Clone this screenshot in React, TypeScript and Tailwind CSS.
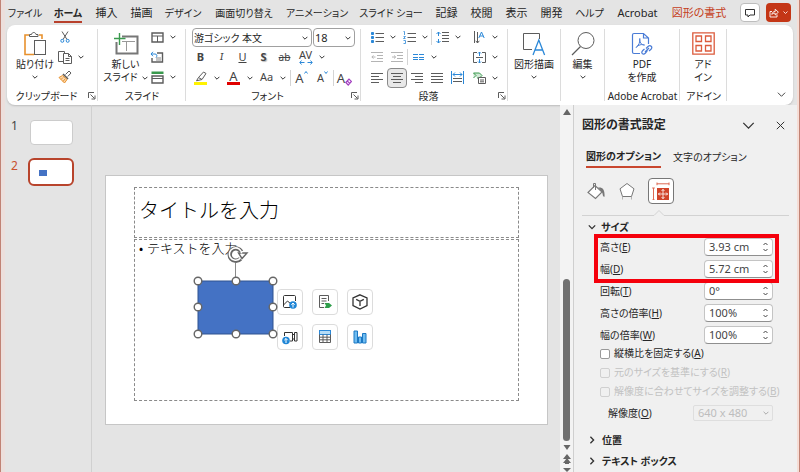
import { useState } from 'react';
import type { ReactNode } from 'react';

const GRAY = '#5c5c5c';
const BLUE = '#2b88d8';

function Svg({ w = 16, h = 16, box, children }: { w?: number; h?: number; box?: string; children: ReactNode }) {
  return (
    <svg width={w} height={h} viewBox={box ?? `0 0 ${w} ${h}`} fill="none" stroke={GRAY} strokeWidth="1" className="block shrink-0" aria-hidden="true">
      {children}
    </svg>
  );
}

function Chevron({ w = 6, color = '#333333' }: { w?: number; color?: string }) {
  return (
    <svg width={w} height={w} viewBox="0 0 6 6" fill="none" stroke={color} strokeWidth={w > 8 ? 0.6 : 1} className="block shrink-0" aria-hidden="true">
      <path d="M0.6 1.8 3 4.2 5.4 1.8" />
    </svg>
  );
}

function Cell({ label, width = 'w-5', selected = false, children }: { label: string; width?: string; selected?: boolean; children: ReactNode }) {
  return (
    <button
      type="button"
      aria-label={label}
      className={`flex h-5 shrink-0 items-center justify-center ${width} ${selected ? 'rounded border border-[#8a8a8a] bg-[#e8e8e8]' : ''}`}
    >
      {children}
    </button>
  );
}

function Drop({ label }: { label: string }) {
  return (
    <Cell label={label} width="w-3">
      <Chevron />
    </Cell>
  );
}

function Sep() {
  return <span className="h-4 w-px shrink-0 bg-[#d4d4d4]" />;
}

function Launcher() {
  return (
    <button type="button" aria-label="詳細設定" className="absolute right-0.5 top-1">
      <Svg w={8} h={8}>
        <path d="M0.5 6V0.5H6M2.5 2.5 6.5 6.5M7 3.5V7H3.5" />
      </Svg>
    </button>
  );
}

function Group({ width, label, launcher = false, children }: { width: string; label: string; launcher?: boolean; children: ReactNode }) {
  return (
    <section aria-label={label || undefined} className={`flex shrink-0 flex-col pt-0.5 ${width}`}>
      <div className="flex h-[61px]">
        <div className="min-w-0 flex-1">{children}</div>
        <span className="mt-0.5 h-[72px] w-px shrink-0 bg-[#dcdcdc]" />
      </div>
      <div className={`relative flex h-4 justify-center whitespace-nowrap text-[10px] leading-4 ${launcher ? 'pr-3' : ''}`}>
        {label}
        {launcher && <Launcher />}
      </div>
    </section>
  );
}

function BigButton({ icon, lines, drop = false, dropInline = false }: { icon: ReactNode; lines: string[]; drop?: boolean; dropInline?: boolean }) {
  return (
    <button type="button" className="flex w-full flex-col items-center pt-0.5 text-[10px] leading-[13px]">
      <span className="flex h-[29px] items-center">{icon}</span>
      {lines.map((line, i) => (
        <span key={line} className="flex items-center gap-1 whitespace-nowrap">
          {line}
          {dropInline && i === lines.length - 1 && <Chevron />}
        </span>
      ))}
      {drop && (
        <span className="flex h-3 items-center">
          <Chevron />
        </span>
      )}
    </button>
  );
}

const TABS = [
  { name: 'ファイル', width: 'w-[30px]', size: 'text-[10px]' },
  { name: 'ホーム', width: 'w-7', size: 'text-[10px]' },
  { name: '挿入', width: 'w-[21px]', size: 'text-[11px]' },
  { name: '描画', width: 'w-[21px]', size: 'text-[11px]' },
  { name: 'デザイン', width: 'w-[34px]', size: 'text-[10px]' },
  { name: '画面切り替え', width: 'w-[60px]', size: 'text-[10px]' },
  { name: 'アニメーション', width: 'w-[58px]', size: 'text-[10px]' },
  { name: 'スライド ショー', width: 'w-[62px]', size: 'text-[10px]' },
  { name: '記録', width: 'w-[21px]', size: 'text-[11px]' },
  { name: '校閲', width: 'w-[21px]', size: 'text-[11px]' },
  { name: '表示', width: 'w-[21px]', size: 'text-[11px]' },
  { name: '開発', width: 'w-[21px]', size: 'text-[11px]' },
  { name: 'ヘルプ', width: 'w-[27px]', size: 'text-[10px]' },
  { name: 'Acrobat', width: 'w-[41px]', size: 'text-[11px]' },
  { name: '図形の書式', width: 'w-[54px]', size: 'text-[11px]' },
];

function TabBar() {
  return (
    <header className="flex h-[25px] items-start pl-[5px] pr-1.5">
      <nav className="flex gap-3.5 pt-1.5" aria-label="リボン">
        {TABS.map(({ name, width, size }) => (
          <button
            key={name}
            type="button"
            className={`flex h-[17px] shrink-0 justify-center whitespace-nowrap leading-[14px] ${width} ${size} ${
              name === 'ホーム' ? 'border-b-2 border-[#b8402c] font-bold' : ''
            } ${name === '図形の書式' ? 'text-[#c43e1c]' : ''}`}
          >
            {name}
          </button>
        ))}
      </nav>
      <div className="ml-auto flex gap-1.5 pt-[3px]">
        <button type="button" aria-label="コメント" className="flex h-[19px] w-5 items-center justify-center rounded border border-[#bdbdbd] bg-white">
          <Svg w={10} h={10}>
            <path d="M0.5 1.5H9.5V7H5L3 9V7H0.5Z" stroke="#333333" />
          </Svg>
        </button>
        <button type="button" aria-label="共有" className="flex h-[19px] w-[25px] items-center justify-center gap-1 rounded bg-[#c43616]">
          <Svg w={10} h={10}>
            <path d="M3 3.5H1V9H8V6.5M2.8 6.5C3 4.5 4.5 3.5 6.2 3.5V1.2L9.4 4.2 6.2 7V5.2C4.8 5.2 3.6 5.5 2.8 6.5Z" stroke="#ffffff" strokeWidth="0.9" />
          </Svg>
          <Chevron w={5} color="#ffffff" />
        </button>
      </div>
    </header>
  );
}

function ClipboardGroup() {
  return (
    <Group width="w-[91px]" label="クリップボード" launcher>
      <div className="flex">
        <div className="ml-2 w-10">
          <BigButton
            drop
            lines={['貼り付け']}
            icon={
              <Svg w={24} h={26}>
                <path d="M6 4H2V23.5H11M16 4H19V8" stroke="#e8912d" strokeWidth="1.6" />
                <path d="M6.5 5.5V3.5H8.5C9 0.8 12.5 0.8 13 3.5H15V5.5Z" fill="#ffffff" />
                <rect x="11.5" y="9.5" width="11" height="14" fill="#ffffff" />
              </Svg>
            }
          />
        </div>
        <div>
          <Cell label="切り取り">
            <Svg w={10} h={12}>
              <path d="M2 0.5 7 8.5M8 0.5 3 8.5" />
              <circle cx="2.3" cy="9.8" r="1.5" stroke={BLUE} />
              <circle cx="7.7" cy="9.8" r="1.5" stroke={BLUE} />
            </Svg>
          </Cell>
          <div className="flex">
            <Cell label="コピー">
              <Svg w={14} h={14}>
                <path d="M5 11.5H0.5V1.5H6.5V3" />
                <path d="M5.5 3.5H10.5L13.5 6.5V13.5H5.5ZM10.5 3.5V6.5H13.5M7.5 8.5H11.5M7.5 10.5H11.5" />
              </Svg>
            </Cell>
            <Drop label="コピーのオプション" />
          </div>
          <Cell label="書式のコピー">
            <Svg w={14} h={14}>
              <path d="M7.5 4.5 11 1 13 3 9.8 6.5" />
              <path d="M5 4 10 9" strokeWidth="1.6" />
              <path d="M4.5 5.5 1 7.5 6.5 13 9 9.5Z" stroke="#e8912d" fill="#fbd9ae" />
              <path d="M3 9.5 5 7.5M5 11.5 7 9" stroke="#e8912d" />
            </Svg>
          </Cell>
        </div>
      </div>
    </Group>
  );
}

function SlideGroup() {
  return (
    <Group width="w-[88px]" label="スライド">
      <div className="flex">
        <div className="ml-1.5 w-[43px]">
          <BigButton
            dropInline
            lines={['新しい', 'スライド']}
            icon={
              <Svg w={26} h={24}>
                <path d="M9 4.5H24.5V21.5H3.5V10" stroke="#777777" strokeWidth="2" />
                <path d="M9 9.5H22M13.5 9.5V19" stroke="#999999" />
                <path d="M6.5 1V13M1 6.5H12.5" stroke="#3a9a4e" strokeWidth="1.4" />
              </Svg>
            }
          />
        </div>
        <div>
          <div className="flex">
            <Cell label="レイアウト">
              <Svg w={13} h={11}>
                <path d="M1 1H12V10H1Z" strokeWidth="1.4" />
                <path d="M1 4H12M6.5 4V10" />
              </Svg>
            </Cell>
            <Drop label="レイアウトの一覧" />
          </div>
          <Cell label="リセット">
            <Svg w={14} h={12}>
              <path d="M7 2H12.5V11H2V7" strokeWidth="1.4" />
              <path d="M6 7H11M6 9H11" stroke="#8a8a8a" />
              <path d="M3 0.8 1 3 3 5.2M1 3H5C7 3 7.5 5 6 6.5" stroke={BLUE} />
            </Svg>
          </Cell>
          <div className="flex">
            <Cell label="セクション">
              <Svg w={13} h={13}>
                <rect x="0.5" y="0.5" width="12" height="2.5" fill="#3a9a4e" stroke="none" />
                <path d="M1 5H12V12H1Z" strokeWidth="1.4" />
                <path d="M1 7.5H12" />
              </Svg>
            </Cell>
            <Drop label="セクションの一覧" />
          </div>
        </div>
      </div>
    </Group>
  );
}

function FontGroup() {
  const letter = 'w-[21px]';
  return (
    <Group width="w-[175px]" label="フォント" launcher>
      <div className="flex h-5 gap-px pl-1.5 pt-px">
        <div className="grid h-[19px] w-[120px] items-center">
          <select aria-label="フォント名" className="col-start-1 row-start-1 h-[19px] w-full appearance-none rounded border border-[#a0a0a0] bg-white px-px text-[10px] leading-4">
            <option>游ゴシック 本文</option>
          </select>
          <span className="pointer-events-none col-start-1 row-start-1 justify-self-end pr-1">
            <Chevron />
          </span>
        </div>
        <div className="grid h-[19px] w-[42px] items-center">
          <select aria-label="フォント サイズ" className="col-start-1 row-start-1 h-[19px] w-full appearance-none rounded border border-[#a0a0a0] bg-white px-px text-[11px] leading-4">
            <option>18</option>
          </select>
          <span className="pointer-events-none col-start-1 row-start-1 justify-self-end pr-1">
            <Chevron />
          </span>
        </div>
      </div>
      <div className="flex h-5 pl-1 text-[11px] leading-5 text-[#444444]">
        <Cell label="太字" width={letter}><b>B</b></Cell>
        <Cell label="斜体" width={letter}><i className="font-serif">I</i></Cell>
        <Cell label="下線" width={letter}><u>U</u></Cell>
        <Cell label="影" width={letter}><b className="[text-shadow:1px_1px_1px_#bbbbbb]">S</b></Cell>
        <Cell label="取り消し線" width={letter}><s className="text-[10px]">ab</s></Cell>
        <Cell label="文字の間隔" width={letter}>
          <span className="flex flex-col items-center">
            <span className="text-[11px] leading-[10px]">AV</span>
            <Svg w={14} h={5}>
              <path d="M2.5 0.5 0.8 2.5 2.5 4.5M1 2.5H5.5M11.5 0.5 13.2 2.5 11.5 4.5M13 2.5H8.5" stroke={BLUE} />
            </Svg>
          </span>
        </Cell>
        <Drop label="文字の間隔の一覧" />
      </div>
      <div className="flex h-[21px] items-center pl-1 text-[#444444]">
        <Cell label="蛍光ペンの色" width={letter}>
          <Svg w={13} h={14}>
            <path d="M4.5 6.5 9.5 1 12 2.5 8 8.5ZM4.5 6.5 2.5 9.8 8 8.5" />
            <rect x="0" y="11" width="13" height="3" fill="#fff200" stroke="none" />
          </Svg>
        </Cell>
        <Drop label="蛍光ペンの色の一覧" />
        <Cell label="フォントの色" width={letter}>
          <span className="flex w-[13px] flex-col items-center border-b-[3px] border-[#e00000] text-[13px] leading-[11px]">A</span>
        </Cell>
        <Drop label="フォントの色の一覧" />
        <Cell label="文字種の変換" width={letter}><span className="text-[11px]">Aa</span></Cell>
        <Drop label="文字種の変換の一覧" />
        <span className="w-px" />
        <Sep />
        <Cell label="フォント サイズの拡大" width={letter}>
          <span className="flex items-start text-[13px] leading-4">
            A
            <Svg w={4} h={5}><path d="M0.5 3.5 2 1.5 3.5 3.5" stroke={BLUE} /></Svg>
          </span>
        </Cell>
        <Cell label="フォント サイズの縮小" width={letter}>
          <span className="flex items-start text-[11px] leading-4">
            A
            <Svg w={4} h={5}><path d="M0.5 1.5 2 3.5 3.5 1.5" stroke={BLUE} /></Svg>
          </span>
        </Cell>
        <Sep />
        <Cell label="書式のクリア" width={letter}>
          <span className="flex items-end text-[13px] leading-4">
            A
            <Svg w={7} h={8}><path d="M0.8 4.5 4 1 6.4 3.4 3.2 7ZM2.2 3 4.8 5.4" stroke="#a33fc0" strokeWidth="1.2" /></Svg>
          </span>
        </Cell>
      </div>
    </Group>
  );
}

function Lines({ d }: { d: string }) {
  return <path d={d} stroke={GRAY} />;
}

function ParagraphGroup() {
  return (
    <Group width="w-[147px]" label="段落" launcher>
      <div className="flex pl-1.5">
        <div className="w-[102px]">
          <div className="flex h-5 items-center">
            <Cell label="箇条書き">
              <Svg w={13} h={13}>
                <Lines d="M4.5 2.5H13M4.5 6.5H13M4.5 10.5H13" />
                <path d="M0.5 1.5H2.5V3.5H0.5ZM0.5 5.5H2.5V7.5H0.5ZM0.5 9.5H2.5V11.5H0.5Z" fill={BLUE} stroke={BLUE} />
              </Svg>
            </Cell>
            <Drop label="箇条書きの一覧" />
            <Cell label="段落番号">
              <Svg w={13} h={13}>
                <Lines d="M4.5 2.5H13M4.5 6.5H13M4.5 10.5H13" />
                <path d="M0.5 0.5H1.5V4M0.5 5.5H2.5L0.5 7.5H2.5M0.5 9.5H2.5V12.5H0.5" stroke={BLUE} strokeWidth="0.8" />
              </Svg>
            </Cell>
            <Drop label="段落番号の一覧" />
            <Sep />
            <Cell label="行間">
              <Svg w={13} h={13}>
                <Lines d="M6 1.5H13M6 4.5H13M6 7.5H13M6 10.5H13" />
                <path d="M2.5 1V5M0.5 3 2.5 1 4.5 3M2.5 12V8M0.5 10 2.5 12 4.5 10" stroke={BLUE} />
              </Svg>
            </Cell>
            <Drop label="行間の一覧" />
          </div>
          <div className="flex h-5 items-center">
            <Cell label="インデントを減らす">
              <Svg w={12} h={11}>
                <path d="M0 0.5H12M6 3.5H12M6 6.5H12M0 9.5H12M2.5 3.5 0.8 5 2.5 6.5M1 5H4.5" stroke="#b4b4b4" />
              </Svg>
            </Cell>
            <Cell label="インデントを増やす">
              <Svg w={12} h={11}>
                <path d="M0 0.5H12M6 3.5H12M6 6.5H12M0 9.5H12M3 3.5 4.7 5 3 6.5M4.5 5H1" stroke="#b4b4b4" />
              </Svg>
            </Cell>
            <Sep />
            <Cell label="段組み">
              <Svg w={11} h={8}>
                <path d="M0 1.5H5M0 4.5H5M0 6.5H5M6 1.5H11M6 4.5H11M6 6.5H11" stroke={BLUE} />
              </Svg>
            </Cell>
            <Drop label="段組みの一覧" />
          </div>
          <div className="flex h-[21px] items-center">
            <Cell label="左揃え">
              <Svg w={12} h={12}><Lines d="M0 1.5H12M0 4.5H8M0 7.5H12M0 10.5H8" /></Svg>
            </Cell>
            <Cell label="中央揃え" selected>
              <Svg w={12} h={12}><Lines d="M0 1.5H12M2 4.5H10M0 7.5H12M2 10.5H10" /></Svg>
            </Cell>
            <Cell label="右揃え">
              <Svg w={12} h={12}><Lines d="M0 1.5H12M4 4.5H12M0 7.5H12M4 10.5H12" /></Svg>
            </Cell>
            <Cell label="両端揃え">
              <Svg w={12} h={12}><Lines d="M0 1.5H12M0 4.5H12M0 7.5H12M0 10.5H12" /></Svg>
            </Cell>
            <Cell label="均等割り付け">
              <Svg w={13} h={13}>
                <Lines d="M2 7.5H11M2 10.5H11" />
                <path d="M0.5 0V13M12.5 0V13M2 3.5H11M4 1.5 2 3.5 4 5.5M9 1.5 11 3.5 9 5.5" stroke={BLUE} />
              </Svg>
            </Cell>
          </div>
        </div>
        <div>
          <div className="flex h-5">
            <Cell label="文字列の方向">
              <Svg w={12} h={13}>
                <path d="M1.5 0V12M4.5 1V12M2.8 9.8 4.5 12 6.3 9.8" />
                <path d="M5.8 7 8.5 1 11.2 7M6.8 5H10.2" stroke={BLUE} />
              </Svg>
            </Cell>
            <Drop label="文字列の方向の一覧" />
          </div>
          <div className="flex h-5">
            <Cell label="文字の配置">
              <Svg w={13} h={13}>
                <path d="M4 1.5H0.5V11.5H4M9 1.5H12.5V11.5H9M3 6.5H10" />
                <path d="M6.5 1V5M5 2.5 6.5 1 8 2.5M6.5 12V8M5 10.5 6.5 12 8 10.5" stroke={BLUE} />
              </Svg>
            </Cell>
            <Drop label="文字の配置の一覧" />
          </div>
          <div className="flex h-[21px] items-center">
            <Cell label="SmartArt に変換">
              <Svg w={13} h={12}>
                <path d="M0.5 1H6.5L9 3.5 6.5 6H4M0.5 1 3 3.5 0.5 6" stroke="#3a9a4e" fill="#cfe8d4" />
                <path d="M5.5 5.5H12.5V11.5H5.5ZM7 8H11M7 9.8H11" fill="#ffffff" />
              </Svg>
            </Cell>
            <Drop label="SmartArt の一覧" />
          </div>
        </div>
      </div>
    </Group>
  );
}

function Ribbon() {
  return (
    <div className="ml-0.5 mr-1 flex h-20 shrink-0 rounded-lg bg-white shadow-[0_1px_2px_#bbbbbb]">
      <ClipboardGroup />
      <SlideGroup />
      <FontGroup />
      <ParagraphGroup />
      <Group width="w-[53px]" label="">
        <BigButton
          drop
          lines={['図形描画']}
          icon={
            <Svg w={24} h={25}>
              <path d="M10 18.5H1.5V2.5H17.5V8" />
              <path d="M11 24 16.8 9 22.6 24M13 19H20.7" stroke={BLUE} strokeWidth="1.3" />
            </Svg>
          }
        />
      </Group>
      <Group width="w-11" label="">
        <BigButton
          drop
          lines={['編集']}
          icon={
            <Svg w={24} h={25}>
              <circle cx="15" cy="9.5" r="8" />
              <path d="M9.5 15.5 1 24" strokeWidth="1.3" />
            </Svg>
          }
        />
      </Group>
      <Group width="w-[75px]" label="Adobe Acrobat">
        <BigButton
          lines={['PDF', 'を作成']}
          icon={
            <Svg w={22} h={24}>
              <g stroke="#4a7cd6" strokeWidth="1.2">
                <path d="M9 21.5H3C2 21.5 1.5 21 1.5 20V3C1.5 2 2 1.5 3 1.5H12.5L17.5 6V12M12.5 1.5V6H17.5" />
                <path d="M5 15.5C7.5 14 9.5 9.5 8.8 6.5 8 9.5 10.5 13.5 13.5 13 11 11.8 7 13 5 15.5Z" strokeWidth="1" />
                <path d="M15 16.5 17 14.5C19.5 12.5 22 15 20 17.3L18 19M16.5 18.5 14.5 21C12 23.5 9.5 21 11.8 18.5L13.5 17M14 20 18 16" />
              </g>
            </Svg>
          }
        />
      </Group>
      <Group width="w-[47px]" label="アドイン">
        <BigButton
          lines={['アド', 'イン']}
          icon={
            <Svg w={23} h={23}>
              <g stroke="#dc5b3c" strokeWidth="1.3">
                <path d="M0.8 0.8H22.2V22.2H0.8Z" />
                <path d="M4 4H9.5V9.5H4ZM13.5 4H19V9.5H13.5ZM4 13.5H9.5V19H4ZM13.5 13.5H19V19H13.5Z" />
              </g>
            </Svg>
          }
        />
      </Group>
      <button type="button" aria-label="リボンを折りたたむ" className="ml-auto self-end pb-1.5 pr-[7px]">
        <Chevron w={9} />
      </button>
    </div>
  );
}

function Thumbnails() {
  return (
    <aside className="w-[87px] shrink-0 border-r border-[#d0d0d0] pl-1.5 pt-[15px] text-[#444444]">
      <div className="flex gap-3">
        <span className="w-[7px] text-xs leading-3">1</span>
        <button type="button" aria-label="スライド 1" className="h-[25px] w-[43px] rounded border border-[#cccccc] bg-white" />
      </div>
      <div className="flex gap-2.5 pt-[13px]">
        <span className="w-[7px] pt-0.5 text-xs leading-3 text-[#c9512f]">2</span>
        <button type="button" aria-label="スライド 2" className="flex h-7 w-[46px] items-center rounded-md border-2 border-[#b8442c] bg-white pl-[9px]">
          <span className="mt-0.5 h-1.5 w-2 bg-[#4472c4]" />
        </button>
      </div>
    </aside>
  );
}

const HANDLES = [
  [5, 40], [43, 40], [80, 40],
  [5, 66], [80, 66],
  [5, 93], [43, 93], [80, 93],
];

function SelectedShape() {
  return (
    <svg width="86" height="100" viewBox="0 0 86 100" fill="none" className="absolute left-[58px] top-px" role="img" aria-label="四角形">
      <path d="M42.5 22V40" stroke="#8a8a8a" />
      <rect x="5" y="40" width="75" height="53" fill="#4472c4" stroke="#2f528f" />
      {HANDLES.map(([cx, cy]) => (
        <circle key={`${cx}-${cy}`} cx={cx} cy={cy} r="3.8" fill="#ffffff" stroke="#666666" strokeWidth="1.4" />
      ))}
      <circle cx="42.5" cy="13.5" r="5" fill="#ffffff" />
      <path d="M48.3 10.5A6.2 6.2 0 1 0 47.5 17.8" stroke="#666666" strokeWidth="4.4" />
      <path d="M45.5 12H54L49 17.5Z" fill="#ffffff" stroke="#666666" strokeWidth="1.4" />
      <path d="M48.8 12.4A6.2 6.2 0 1 0 47.1 17.4" stroke="#ffffff" strokeWidth="1.6" />
    </svg>
  );
}

const INSERTS: { label: string; icon: ReactNode }[] = [
  {
    label: '図',
    icon: (
      <>
        <path d="M8 13.5H2.5C2 13.5 1.5 13 1.5 12.5V2.5C1.5 2 2 1.5 2.5 1.5H12.5C13 1.5 13.5 2 13.5 2.5V7M1.5 11 5.5 7 9 10" stroke="#333333" />
        <circle cx="11" cy="11" r="3.8" fill="#1f86d6" stroke="none" />
        <path d="M11 13.5V9M9.3 10.7 11 9 12.7 10.7" stroke="#ffffff" />
      </>
    ),
  },
  {
    label: 'アイコン',
    icon: (
      <>
        <path d="M7 13.5H2.5V1.5H11.5V7M4.5 4.5H9.5M4.5 7H9.5M4.5 9.5H7" />
        <path d="M7.5 9H12L15 11.5 12 14H7.5L9 11.5Z" fill="#2f9e4b" stroke="none" />
      </>
    ),
  },
  {
    label: '3D モデル',
    icon: <path d="M8 0.8 15 4V11.5L8 15 1 11.5V4ZM4.2 5.4 8 7.3 11.8 5.4M8 7.3V12" stroke="#333333" strokeWidth="1.3" />,
  },
  {
    label: 'ビデオ',
    icon: (
      <>
        <path d="M2.5 7V3.5H10.5V12H8M10.5 6.5 12.5 4.5M10.5 9 12.5 11M12.5 3.5H15V12H12.5Z" stroke="#333333" />
        <circle cx="4" cy="11.5" r="3.8" fill="#1f86d6" stroke="none" />
        <path d="M4 14V9.5M2.3 11.2 4 9.5 5.7 11.2" stroke="#ffffff" />
      </>
    ),
  },
  {
    label: '表',
    icon: (
      <>
        <rect x="2.5" y="1.5" width="11" height="4" fill="#b5dcf7" stroke={BLUE} />
        <path d="M2.5 5.5V13.5H13.5V5.5M2.5 8.2H13.5M2.5 10.8H13.5M6 5.5V13.5M10 5.5V13.5" />
      </>
    ),
  },
  {
    label: 'グラフ',
    icon: <path d="M2 2H5.5V14H2ZM6.5 8H9.5V14H6.5ZM10.5 4.5H14V14H10.5Z" fill="#6fbcf0" stroke="#1b78c4" />,
  },
];

function SlideCanvas() {
  return (
    <main className="min-w-0 flex-1 pl-[13px] pr-3 pt-[70px]">
      <div className="aspect-[443/250] w-full border border-[#c6c6c6] bg-white px-7 pt-[11px]">
        <div className="flex h-[51px] items-center border border-dashed border-[#8a8a8a] px-1 font-['Noto_Sans_CJK_JP',sans-serif] text-xl font-thin leading-6 text-black [font-feature-settings:normal]">
          <h1 className="mt-[-6px] whitespace-nowrap font-light">タイトルを入力</h1>
        </div>
        <div className="relative mt-px h-[162px] border border-dashed border-[#8a8a8a] px-1 font-['Noto_Sans_CJK_JP',sans-serif] text-[13px] font-light leading-4 text-black [font-feature-settings:normal]">
          <ul>
            <li className="flex gap-1 whitespace-nowrap">
              <span className="w-1">•</span>テキストを入力
            </li>
          </ul>
          <div className="absolute left-[142px] top-[49px] grid grid-cols-3 gap-[9px]">
            {INSERTS.map(({ label, icon }) => (
              <button key={label} type="button" aria-label={label} className="flex size-[26px] items-center justify-center rounded border border-[#dcdcdc] bg-white">
                <Svg>{icon}</Svg>
              </button>
            ))}
          </div>
          <SelectedShape />
        </div>
      </div>
    </main>
  );
}

function ScrollBar() {
  return (
    <div className="flex w-[13px] shrink-0 flex-col items-center bg-[#f3f3f3] pt-1">
      <Svg w={8} h={6}><path d="M0 6H8L4 0Z" fill="#666666" stroke="none" /></Svg>
      <div className="mt-auto h-[162px] w-[7px] rounded-full bg-[#717171]" />
      <div className="flex flex-col items-center gap-1 pt-1">
        <Svg w={8} h={5}><path d="M0.5 0H7.5L4 5Z" fill="#666666" stroke="none" /></Svg>
        <Svg w={8} h={10}><path d="M0 5H8L4 0ZM0 9H8L4 4ZM2 9H6V10H2Z" fill="#666666" stroke="none" /></Svg>
        <Svg w={8} h={4}><path d="M0 0H8L4 4Z" fill="#666666" stroke="none" /></Svg>
      </div>
    </div>
  );
}

const SIZE_ROWS = [
  { id: 'height', text: '高さ', key: 'E', value: '3.93 cm' },
  { id: 'width', text: '幅', key: 'D', value: '5.72 cm' },
  { id: 'rotation', text: '回転', key: 'T', value: '0°' },
  { id: 'scale-height', text: '高さの倍率', key: 'H', value: '100%' },
  { id: 'scale-width', text: '幅の倍率', key: 'W', value: '100%' },
];

const CHECKS = [
  { id: 'lock', text: '縦横比を固定する', key: 'A', disabled: false },
  { id: 'relative', text: '元のサイズを基準にする', key: 'R', disabled: true },
  { id: 'best', text: '解像度に合わせてサイズを調整する', key: 'B', disabled: true },
];

function SizeRow({ id, text, hotkey, initial }: { id: string; text: string; hotkey: string; initial: string }) {
  const [value, setValue] = useState(initial);
  return (
    <div className="flex h-[22px] items-center justify-between">
      <label htmlFor={id} className="whitespace-nowrap">
        {text}(<u>{hotkey}</u>)
      </label>
      <div className="flex h-[18px] w-[69px] items-center rounded border border-[#c4c4c4] border-b-[#8f8f8f] bg-white pl-1 pr-1">
        <input id={id} value={value} onChange={(e) => setValue(e.target.value)} className="h-4 w-full min-w-0 bg-transparent text-[11px] leading-4 text-[#444444] outline-none" />
        <span className="flex flex-col gap-0.5">
          <button type="button" aria-label="増やす"><svg width="5" height="4" viewBox="0 0 5 4" fill="none" stroke="#444444" className="block"><path d="M0.5 3 2.5 1 4.5 3" /></svg></button>
          <button type="button" aria-label="減らす"><svg width="5" height="4" viewBox="0 0 5 4" fill="none" stroke="#444444" className="block"><path d="M0.5 1 2.5 3 4.5 1" /></svg></button>
        </span>
      </div>
    </div>
  );
}

function Collapsed({ title }: { title: string }) {
  return (
    <button type="button" className="flex h-[21px] items-center gap-1.5 font-bold leading-4">
      <span className="-rotate-90"><Chevron w={8} /></span>
      {title}
    </button>
  );
}

function FormatPane() {
  return (
    <aside className="w-[224px] shrink-0 border-l border-[#cfcfcf] bg-[#f0f0f0] pl-2 pr-2 text-[10px]">
      <div className="flex h-10 items-center">
        <h2 className="text-xs font-bold leading-4">図形の書式設定</h2>
        <div className="ml-auto flex items-center gap-[21px] pr-1">
          <button type="button" aria-label="オプション"><Chevron w={13} /></button>
          <button type="button" aria-label="閉じる">
            <Svg w={9} h={9}><path d="M0.8 0.8 8.2 8.2M8.2 0.8 0.8 8.2" stroke="#333333" /></Svg>
          </button>
        </div>
      </div>
      <div className="flex h-[23px] gap-3 pl-1 leading-3">
        <button type="button" className="h-[23px] whitespace-nowrap border-b-2 border-[#c9472f] font-bold">図形のオプション</button>
        <button type="button" className="h-[23px] whitespace-nowrap">文字のオプション</button>
      </div>
      <div className="mt-2.5 flex items-center gap-[11px] pl-1">
        <button type="button" aria-label="塗りつぶしと線">
          <Svg w={20} h={20}>
            <path d="M2 11.5 9 4.5 16 11 9.5 17.5Z" fill="#ffffff" stroke="#777777" strokeWidth="1.1" />
            <path d="M7.5 7V2.5H9.5V9" stroke="#777777" />
            <path d="M12 6.5C16.5 6 18.8 8 18.6 15.5 17.8 16 17 15.5 16.8 14 16.6 11 15 9.5 12 6.5Z" fill="#777777" stroke="none" />
          </Svg>
        </button>
        <button type="button" aria-label="効果">
          <Svg w={20} h={20}>
            <path d="M10 2.5 17 7.8 14.5 15.5H5.5L3 7.8Z" fill="#ffffff" stroke="#777777" />
            <path d="M5.5 16V18.5M14.5 16V18.5" stroke="#b4b4b4" />
          </Svg>
        </button>
        <button type="button" aria-label="サイズとプロパティ" className="flex size-[26px] items-center justify-center rounded border border-[#777777] bg-white">
          <Svg w={18} h={18}>
            <path d="M5 6H17V18H5Z" fill="#d0442a" stroke="none" />
            <path d="M5 1.8H17M5 0.5V3.2M17 0.5V3.2M1.5 6V18M0.2 6H2.8M0.2 18H2.8" stroke="#dc6a54" />
            <path d="M11 7V17M6 12H16M9.5 9 11 7.5 12.5 9M9.5 15 11 16.5 12.5 15M8 10.5 6.5 12 8 13.5M14 10.5 15.5 12 14 13.5" stroke="#ffffff" strokeWidth="0.8" />
          </Svg>
        </button>
      </div>
      <svg width="100%" height="8" className="mt-1 block" fill="none" stroke="#d2d2d2" aria-hidden="true">
        <path d="M0 7.5H72L77 2.5 82 7.5H400" />
      </svg>
      <button type="button" className="flex h-5 items-center gap-[5px] pl-1.5 pt-px font-bold leading-4">
        <Chevron w={8} />
        サイズ
      </button>
      <div className="relative pl-[18px] pr-4">
        {SIZE_ROWS.map((r) => (
          <SizeRow key={r.id} id={r.id} text={r.text} hotkey={r.key} initial={r.value} />
        ))}
        <div className="pointer-events-none absolute left-3 right-2.5 -top-0.5 h-[49px] border-4 border-[#f5000c]" />
      </div>
      <div className="-mt-0.5 pl-[18px]">
        {CHECKS.map((c) => (
          <div key={c.id} className={`flex h-[19px] items-center gap-1 whitespace-nowrap ${c.disabled ? 'text-[#c2c2c2]' : ''}`}>
            <input id={c.id} type="checkbox" disabled={c.disabled} className="size-2.5 shrink-0 appearance-none rounded-xs border border-[#999999] bg-white checked:bg-[#c43616] disabled:border-[#d0d0d0] disabled:bg-transparent" />
            <label htmlFor={c.id}>
              {c.text}(<u>{c.key}</u>)
            </label>
          </div>
        ))}
        <div className="flex h-6 items-center justify-between pl-2 pr-4">
          <label htmlFor="resolution">
            解像度(<u>O</u>)
          </label>
          <div className="grid w-20 items-center">
            <select id="resolution" disabled className="col-start-1 row-start-1 h-4 w-full appearance-none rounded-xs border border-[#dedede] px-1 text-[11px] leading-[14px] text-[#bdbdbd] opacity-100">
              <option>640 x 480</option>
            </select>
            <span className="pointer-events-none col-start-1 row-start-1 justify-self-end pr-1"><Chevron color="#aaaaaa" /></span>
          </div>
        </div>
      </div>
      <div className="pl-1.5 pt-1">
        <Collapsed title="位置" />
        <Collapsed title="テキスト ボックス" />
      </div>
    </aside>
  );
}

export default function App() {
  return (
    <div className="h-screen border-x border-[#c08375] bg-[#f6ddd6] font-['Noto_Sans','Noto_Sans_CJK_JP',sans-serif] text-[11px] text-[#262626] [font-feature-settings:'palt']">
      <div className="mr-0.5 flex h-full flex-col overflow-hidden border-l-4 border-[#ecdfdc] bg-[#e4e4e4]">
        <TabBar />
        <Ribbon />
        <div className="flex min-h-0 flex-1">
          <Thumbnails />
          <SlideCanvas />
          <ScrollBar />
          <FormatPane />
        </div>
      </div>
    </div>
  );
}
